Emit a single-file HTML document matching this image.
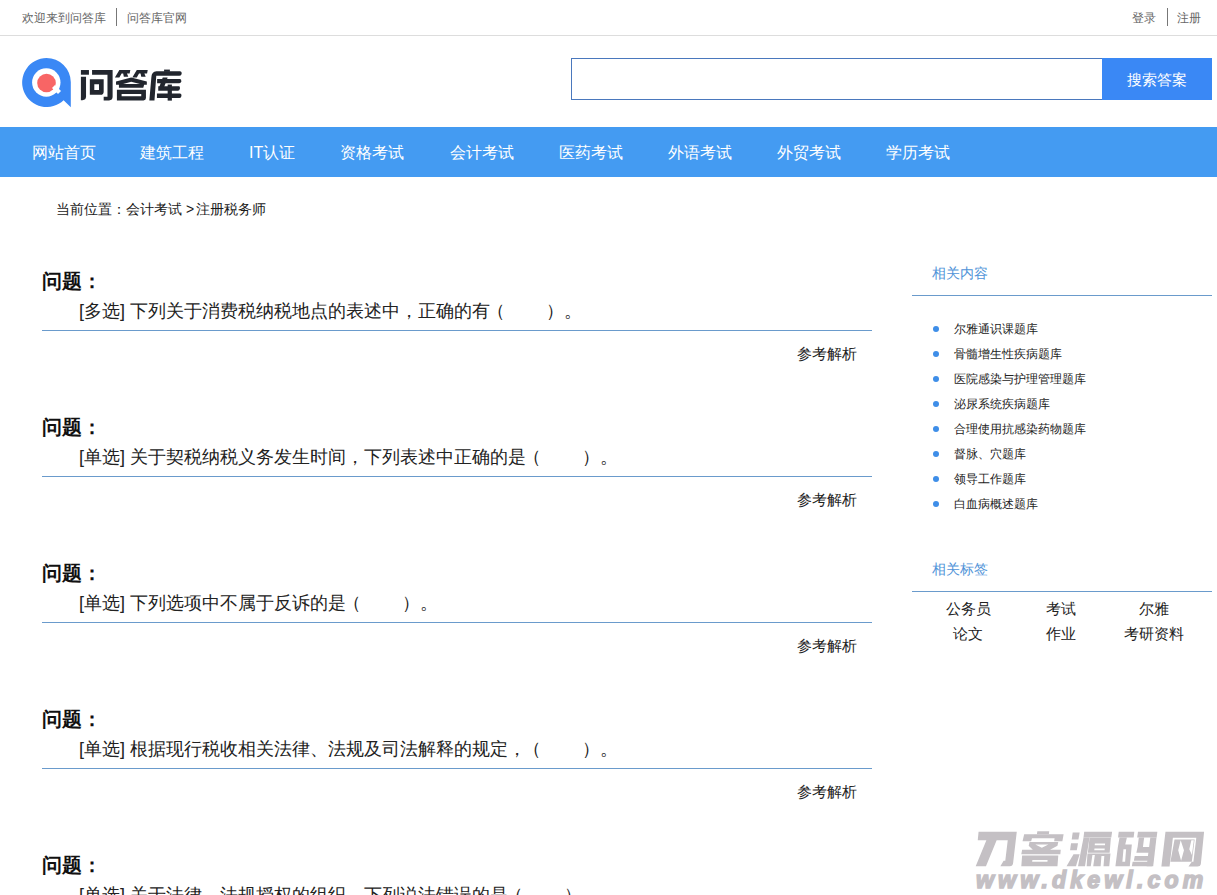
<!DOCTYPE html>
<html><head><meta charset="utf-8">
<style>
*{margin:0;padding:0;box-sizing:border-box}
html,body{width:1217px;height:895px;overflow:hidden;background:#fff;font-family:"Liberation Sans",sans-serif;color:#222}
.abs{position:absolute;white-space:nowrap}
#top{position:absolute;left:0;top:0;width:1217px;height:36px;border-bottom:1px solid #ddd}
.tl{font-size:12px;color:#666;line-height:14px}
.vsep{position:absolute;width:1px;background:#777}
#search{position:absolute;left:571px;top:58px;width:532px;height:42px;border:1px solid #4a78bd;border-right:none}
#btn{position:absolute;left:1102px;top:58px;width:110px;height:42px;background:#3a88f5;color:#fff;font-size:15px;line-height:44px;text-align:center}
#nav{position:absolute;left:0;top:127px;width:1217px;height:50px;background:#449bf2}
.ni{position:absolute;top:1px;line-height:50px;font-size:16px;color:#fff;white-space:nowrap}
.crumb{font-size:14px;color:#1a1a1a;line-height:16px}
.qh{font-size:20px;font-weight:bold;color:#111;line-height:22px}
.qt{font-size:18px;color:#222;line-height:22px}
.ql{position:absolute;left:42px;width:830px;height:1px;background:#6a9bcc}
.ref{font-size:15px;color:#222;line-height:16px}
.sh{font-size:14px;color:#4f93d8;line-height:16px}
.sl{position:absolute;left:912px;width:300px;height:1px;background:#6a9bcc}
.li{font-size:12px;color:#222;line-height:14px}
.dot{position:absolute;width:6px;height:6px;border-radius:50%;background:#3e8ee8}
.tag{font-size:15px;color:#222;line-height:16px;text-align:center;width:90px}
.sp{display:inline-block;width:41px}
.lp{font-weight:normal;margin-left:-3px}
</style></head><body>
<div id="top"></div>
<div class="abs tl" style="left:22px;top:11px">欢迎来到问答库</div>
<div class="vsep" style="left:116px;top:8px;height:18px"></div>
<div class="abs tl" style="left:127px;top:11px">问答库官网</div>
<div class="abs tl" style="left:1132px;top:11px">登录</div>
<div class="vsep" style="left:1167px;top:8px;height:18px"></div>
<div class="abs tl" style="left:1177px;top:11px">注册</div>

<svg class="abs" style="left:20px;top:55px" width="56" height="56" viewBox="20 55 56 56">
<path d="M46.5 58 A24.5 24.5 0 1 0 63.6 100.2 L70.8 107.2 L70.8 82 A24.3 24.3 0 0 0 46.5 58 Z" fill="#3a88f5"/>
<circle cx="46.3" cy="82.5" r="14.2" fill="#fff"/>
<circle cx="46.5" cy="83" r="9.3" fill="#f86565"/>
<path d="M52 88 L58 94 L61 91 L55 85 Z" fill="#fff"/>
</svg>
<svg class="abs" style="left:0;top:0" width="200" height="120" viewBox="0 0 200 120">
<g fill="#22262e" fill-rule="evenodd">
<g transform="translate(78,64) scale(0.04466)">
<path d="M65,135H245V240H65Z"/>
<path d="M65,285H180V730Q180,810 100,810H65Z"/>
<path d="M315,135H775V735Q775,815 695,815H575V735H660V240H315Z"/>
<path d="M265,340H575V620Q575,690 505,690H265Z M365,455V580H470V455Z"/>
</g>
<g transform="translate(112,64) scale(0.04466)">
<path d="M65,300L165,135H410L395,215H335L365,285H265L250,215H215L165,300Z"/>
<path d="M455,300L555,135H800L785,215H725L755,285H655L640,215H605L555,300Z"/>
<path d="M90,390L430,305L780,390V465H720L700,530H155V465H90Z M250,450L430,400L625,450Z"/>
<path d="M110,575H760V760Q760,815 705,815H110Z M215,670H655V720H215Z"/>
</g>
<g transform="translate(148,64) scale(0.04466)">
<path d="M360,125H490V175H360Z"/>
<path d="M190,160H720Q760,165 755,210L745,240Q735,265 700,265H185L145,820H30L75,300Q80,165 190,160Z"/>
<path d="M205,335H720Q750,340 745,385Q740,430 700,430H205Z"/>
<path d="M330,300H440L360,520H250Z"/>
<path d="M230,500H700Q720,510 715,550Q705,600 670,600H230Z"/>
<path d="M440,460H535V820H440Z"/>
<path d="M200,660H720Q755,665 750,710Q745,760 705,760H200Z"/>
</g>
</g></svg>

<div id="search"></div>
<div id="btn">搜索答案</div>

<div id="nav">
<div class="ni" style="left:32px">网站首页</div>
<div class="ni" style="left:140px">建筑工程</div>
<div class="ni" style="left:249px">IT认证</div>
<div class="ni" style="left:340px">资格考试</div>
<div class="ni" style="left:450px">会计考试</div>
<div class="ni" style="left:559px">医药考试</div>
<div class="ni" style="left:668px">外语考试</div>
<div class="ni" style="left:777px">外贸考试</div>
<div class="ni" style="left:886px">学历考试</div>
</div>

<div class="abs crumb" style="left:56px;top:201px">当前位置：会计考试 &gt;<span style="margin-left:2px">注册税务师</span></div>

<!-- questions -->
<div class="abs qh" style="left:42px;top:270px">问题：</div>
<div class="abs qt" style="left:79px;top:300px">[多选] 下列关于消费税纳税地点的表述中，正确的有<b class="lp">（</b><i class="sp"></i>）。</div>
<div class="ql" style="top:330px"></div>
<div class="abs ref" style="left:797px;top:346px">参考解析</div>

<div class="abs qh" style="left:42px;top:416px">问题：</div>
<div class="abs qt" style="left:79px;top:446px">[单选] 关于契税纳税义务发生时间，下列表述中正确的是<b class="lp">（</b><i class="sp"></i>）。</div>
<div class="ql" style="top:476px"></div>
<div class="abs ref" style="left:797px;top:492px">参考解析</div>

<div class="abs qh" style="left:42px;top:562px">问题：</div>
<div class="abs qt" style="left:79px;top:592px">[单选] 下列选项中不属于反诉的是<b class="lp">（</b><i class="sp"></i>）。</div>
<div class="ql" style="top:622px"></div>
<div class="abs ref" style="left:797px;top:638px">参考解析</div>

<div class="abs qh" style="left:42px;top:708px">问题：</div>
<div class="abs qt" style="left:79px;top:738px">[单选] 根据现行税收相关法律、法规及司法解释的规定，<b class="lp">（</b><i class="sp"></i>）。</div>
<div class="ql" style="top:768px"></div>
<div class="abs ref" style="left:797px;top:784px">参考解析</div>

<div class="abs qh" style="left:42px;top:854px">问题：</div>
<div class="abs qt" style="left:79px;top:884px">[单选] 关于法律、法规授权的组织，下列说法错误的是<b class="lp">（</b><i class="sp"></i>）。</div>

<!-- sidebar -->
<div class="abs sh" style="left:932px;top:265px">相关内容</div>
<div class="sl" style="top:295px"></div>
<div class="dot" style="left:933px;top:326px"></div><div class="abs li" style="left:954px;top:322px">尔雅通识课题库</div>
<div class="dot" style="left:933px;top:351px"></div><div class="abs li" style="left:954px;top:347px">骨髓增生性疾病题库</div>
<div class="dot" style="left:933px;top:376px"></div><div class="abs li" style="left:954px;top:372px">医院感染与护理管理题库</div>
<div class="dot" style="left:933px;top:401px"></div><div class="abs li" style="left:954px;top:397px">泌尿系统疾病题库</div>
<div class="dot" style="left:933px;top:426px"></div><div class="abs li" style="left:954px;top:422px">合理使用抗感染药物题库</div>
<div class="dot" style="left:933px;top:451px"></div><div class="abs li" style="left:954px;top:447px">督脉、穴题库</div>
<div class="dot" style="left:933px;top:476px"></div><div class="abs li" style="left:954px;top:472px">领导工作题库</div>
<div class="dot" style="left:933px;top:501px"></div><div class="abs li" style="left:954px;top:497px">白血病概述题库</div>

<div class="abs sh" style="left:932px;top:561px">相关标签</div>
<div class="sl" style="top:591px"></div>
<div class="abs tag" style="left:923px;top:601px">公务员</div>
<div class="abs tag" style="left:1016px;top:601px">考试</div>
<div class="abs tag" style="left:1109px;top:601px">尔雅</div>
<div class="abs tag" style="left:923px;top:626px">论文</div>
<div class="abs tag" style="left:1016px;top:626px">作业</div>
<div class="abs tag" style="left:1109px;top:626px">考研资料</div>

<!-- watermark -->
<svg class="abs" id="wm1" style="left:960px;top:820px" width="257" height="52" viewBox="960 820 257 52">
<g fill="#c4c0c4" fill-rule="evenodd">
<g transform="translate(972,828) scale(0.08217)">
<path d="M80,45H545L500,430Q495,465 460,465H345L385,400H405L435,150H300L170,465H45L175,150H70Z"/>
<path d="M795,40H940L935,75H790Z"/>
<path d="M635,75H1115L1100,160H1000L1005,125H730L720,160H615Z"/>
<path d="M700,170H1050L1040,215L950,265H1080L1075,320H600L610,265H740L690,215Z M770,200H930L850,240Z"/>
<path d="M610,335H1050L1040,465H600Z M735,390H920L918,410H732Z"/>
</g>
<g transform="translate(1062,828) scale(0.08217)">
<path d="M130,55H215L200,140H118Z"/>
<path d="M110,185H195L180,270H98Z"/>
<path d="M140,320H215L170,465H55Z"/>
<path d="M270,45H610L600,115H262Z"/>
<path d="M262,115H335L280,465H195Z"/>
<path d="M335,120H595L580,300H315Z M400,190H525L523,210H398Z M395,250H520L518,270H393Z"/>
<path d="M310,310H590L575,465H300Z M370,330H400L380,465H350Z M480,340H515L505,465H470Z"/>
<path d="M690,45H880L872,115H682Z"/>
<path d="M700,115H790L770,200H850L825,465H650L680,230Z M748,260H780L768,410H735Z"/>
<path d="M925,45H1160L1152,115H915Z"/>
<path d="M1075,115H1150L1110,465H1030Z"/>
<path d="M935,115H1000L985,230H920Z"/>
<path d="M920,230H1090L1080,300H905Z"/>
<path d="M885,340H1080L1070,400H875Z"/>
<path d="M860,410H1100L1095,465H850Z"/>
</g>
<g transform="translate(1117,828) scale(0.08217)">
<path d="M590,45H1060L1020,440Q1015,470 980,470H870L910,410H930L965,120H680L640,470H540Z"/>
<path d="M700,140H945L910,410H650Z M775,150L815,270L780,400L745,270Z M905,150H935L912,330L880,260Z"/>
</g>
</g></svg>
<div class="abs" id="wm2" style="left:976px;top:867px;font-size:23px;line-height:26px;font-weight:bold;font-style:italic;color:#c5c1c5;-webkit-text-stroke:1.5px #c4c0c4;letter-spacing:4.2px">www.dkewl.com</div>
</body></html>
